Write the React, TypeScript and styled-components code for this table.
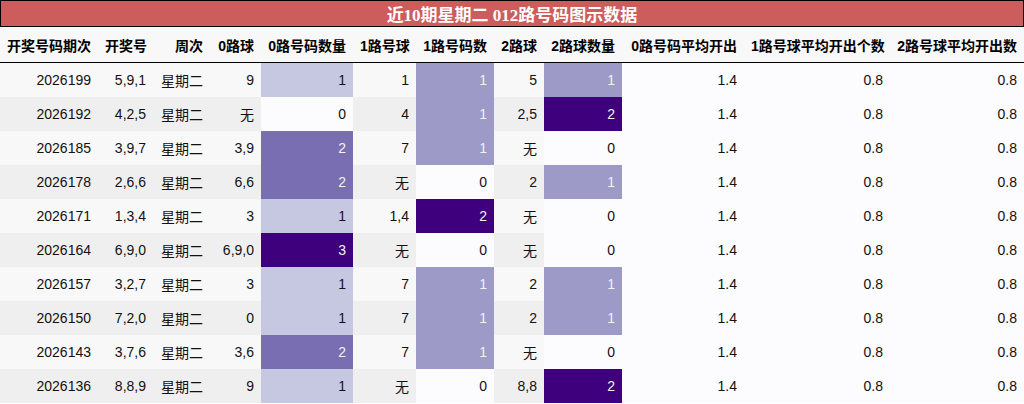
import React from "react";
import styled, { createGlobalStyle } from "styled-components";

const GlobalStyle = createGlobalStyle`
  html, body { margin: 0; padding: 0; background: #ffffff; }
  body { font-family: "Liberation Sans", "Noto Sans CJK SC", sans-serif; }
`;

const Wrap = styled.div`
  width: 1024px;
  display: flex;
  flex-direction: column;
`;

const TitleBar = styled.div`
  height: 25px;
  border: 1px solid #000;
  background: #cd5c5c;
  color: #ffffff;
  font-family: "Liberation Serif", "Noto Sans CJK SC", serif;
  font-weight: bold;
  font-size: 17px;
  display: flex;
  align-items: center;
  justify-content: center;
`;

const Table = styled.table`
  width: 1024px;
  border-collapse: collapse;
  table-layout: fixed;
  font-size: 14px;
`;

const HeadRow = styled.tr`
  background: #f8f8f8;
  border-bottom: 1px solid #000;
`;

const Th = styled.th`
  height: 35px;
  padding: 0 7px;
  text-align: right;
  font-weight: bold;
  color: #000;
  white-space: nowrap;
`;

const Row = styled.tr<{ $even: boolean }>`
  background: ${(p) => (p.$even ? "#efefef" : "#f8f8f8")};
`;

const Td = styled.td<{ $bg?: string; $fg?: string }>`
  height: 34px;
  padding: 0 7px;
  text-align: right;
  white-space: nowrap;
  color: ${(p) => p.$fg ?? "#111"};
  background: ${(p) => p.$bg ?? "transparent"};
`;

const widths = [98, 55, 57, 51, 92, 63, 78, 50, 78, 122, 146, 134];
const headers = [
  "开奖号码期次",
  "开奖号",
  "周次",
  "0路球",
  "0路号码数量",
  "1路号球",
  "1路号码数",
  "2路球",
  "2路球数量",
  "0路号码平均开出",
  "1路号球平均开出个数",
  "2路号球平均开出数",
];

type R = [string, string, string, string, number, string, number, string, number];
const rows: R[] = [
  ["2026199", "5,9,1", "星期二", "9", 1, "1", 1, "5", 1],
  ["2026192", "4,2,5", "星期二", "无", 0, "4", 1, "2,5", 2],
  ["2026185", "3,9,7", "星期二", "3,9", 2, "7", 1, "无", 0],
  ["2026178", "2,6,6", "星期二", "6,6", 2, "无", 0, "2", 1],
  ["2026171", "1,3,4", "星期二", "3", 1, "1,4", 2, "无", 0],
  ["2026164", "6,9,0", "星期二", "6,9,0", 3, "无", 0, "无", 0],
  ["2026157", "3,2,7", "星期二", "3", 1, "7", 1, "2", 1],
  ["2026150", "7,2,0", "星期二", "0", 1, "7", 1, "2", 1],
  ["2026143", "3,7,6", "星期二", "3,6", 2, "7", 1, "无", 0],
  ["2026136", "8,8,9", "星期二", "9", 1, "无", 0, "8,8", 2],
];

const c0: Record<number, [string, string]> = {
  0: ["#fcfbfd", "#111"],
  1: ["#c6c7e1", "#111"],
  2: ["#796eb2", "#f1f1f1"],
  3: ["#3f007d", "#f1f1f1"],
};
const c12: Record<number, [string, string]> = {
  0: ["#fcfbfd", "#111"],
  1: ["#9e9ac8", "#f1f1f1"],
  2: ["#3f007d", "#f1f1f1"],
};
const flat = "#fcfbfd";

export default function App() {
  return (
    <>
      <GlobalStyle />
      <Wrap>
        <TitleBar>近10期星期二 012路号码图示数据</TitleBar>
        <Table>
          <colgroup>
            {widths.map((w, i) => (
              <col key={i} style={{ width: w }} />
            ))}
          </colgroup>
          <thead>
            <HeadRow>
              {headers.map((h) => (
                <Th key={h}>{h}</Th>
              ))}
            </HeadRow>
          </thead>
          <tbody>
            {rows.map((r, i) => (
              <Row key={r[0]} $even={i % 2 === 1}>
                <Td>{r[0]}</Td>
                <Td>{r[1]}</Td>
                <Td>{r[2]}</Td>
                <Td>{r[3]}</Td>
                <Td $bg={c0[r[4]][0]} $fg={c0[r[4]][1]}>{r[4]}</Td>
                <Td>{r[5]}</Td>
                <Td $bg={c12[r[6]][0]} $fg={c12[r[6]][1]}>{r[6]}</Td>
                <Td>{r[7]}</Td>
                <Td $bg={c12[r[8]][0]} $fg={c12[r[8]][1]}>{r[8]}</Td>
                <Td $bg={flat}>1.4</Td>
                <Td $bg={flat}>0.8</Td>
                <Td $bg={flat}>0.8</Td>
              </Row>
            ))}
          </tbody>
        </Table>
      </Wrap>
    </>
  );
}
